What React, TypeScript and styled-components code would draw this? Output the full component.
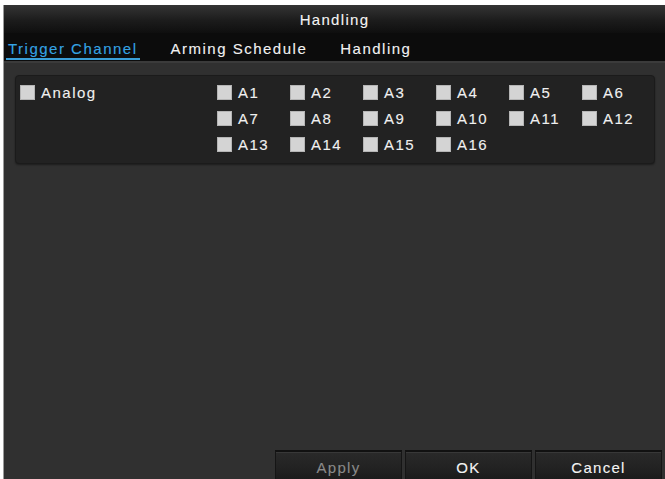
import React from "react";
import styled, { createGlobalStyle } from "styled-components";

const Global = createGlobalStyle`
  html, body { margin: 0; padding: 0; background: #ffffff; }
  body { font-family: "Liberation Sans", Arial, sans-serif; }
  * { box-sizing: border-box; }
`;

const Page = styled.div`
  width: 665px;
  height: 479px;
  padding: 5px 0 0 3px;
  background: #ffffff;
  overflow: hidden;
`;

const Dialog = styled.div`
  height: 474px;
  display: flex;
  flex-direction: column;
  border-left: 1px solid #9a9a9a;
  background: #303030;
  font-size: 15px;
  letter-spacing: 1.5px;
  color: #f2f2f2;
  -webkit-text-stroke: 0.1px currentColor;
`;

const TitleBar = styled.div`
  height: 28px;
  display: flex;
  align-items: center;
  justify-content: center;
  background: linear-gradient(#343434 0%, #1c1c1c 55%, #0f0f0f 100%);
  letter-spacing: 1.3px;
  color: #f4f4f4;
`;

const TabBar = styled.div`
  height: 30px;
  display: flex;
  align-items: flex-start;
  gap: 29px;
  padding: 5px 0 0 2px;
  background: #0c0c0c;
  border-bottom: 2px solid #3b3b3b;
`;

const Tab = styled.div<{ $active?: boolean }>`
  height: 22px;
  display: flex;
  align-items: center;
  padding: 0 2px 0 2px;
  color: ${(p) => (p.$active ? "#35a4e4" : "#f2f2f2")};
  border-bottom: 2px solid ${(p) => (p.$active ? "#3a9fd8" : "transparent")};
`;

const Body = styled.div`
  flex: 1;
  display: flex;
  flex-direction: column;
  padding: 12px 10px 0 11px;
  background: #303030;
`;

const Panel = styled.div`
  display: grid;
  grid-template-columns: 197px repeat(6, 73px);
  grid-auto-rows: 26px;
  padding: 3px 0 6px 4px;
  background: #222222;
  border: 1px solid #1b1b1b;
  border-radius: 4px;
  box-shadow: 0 1px 2px rgba(0, 0, 0, 0.4);
`;

const Item = styled.label<{ $col: number; $row: number }>`
  grid-column: ${(p) => p.$col};
  grid-row: ${(p) => p.$row};
  display: flex;
  align-items: center;
  gap: 6px;
  color: #f0f0f0;
`;

const Box = styled.span`
  width: 15px;
  height: 15px;
  flex: none;
  background: #d4d4d4;
  border: 1px solid #b5b5b5;
`;

const Footer = styled.div`
  height: 29px;
  display: flex;
  justify-content: flex-end;
  gap: 3px;
  padding-right: 3px;
  background: #303030;
`;

const Button = styled.div<{ $disabled?: boolean }>`
  width: 127px;
  display: flex;
  align-items: center;
  justify-content: center;
  padding-top: 3px;
  background: linear-gradient(#2a2a2a 0%, #222222 60%, #1b1b1b 100%);
  border-top: 2px solid #111111;
  border-left: 1px solid #151515;
  border-right: 1px solid #151515;
  box-shadow: inset 0 1px 0 #383838;
  color: ${(p) => (p.$disabled ? "#8a8a8a" : "#f4f4f4")};
  letter-spacing: 1.3px;
`;

const channels = Array.from({ length: 16 }, (_, i) => `A${i + 1}`);

export default function App() {
  return (
    <Page>
      <Global />
      <Dialog>
        <TitleBar>Handling</TitleBar>
        <TabBar>
          <Tab $active>Trigger Channel</Tab>
          <Tab>Arming Schedule</Tab>
          <Tab>Handling</Tab>
        </TabBar>
        <Body>
          <Panel>
            <Item $col={1} $row={1}>
              <Box />
              Analog
            </Item>
            {channels.map((name, i) => (
              <Item key={name} $col={(i % 6) + 2} $row={Math.floor(i / 6) + 1}>
                <Box />
                {name}
              </Item>
            ))}
          </Panel>
        </Body>
        <Footer>
          <Button $disabled>Apply</Button>
          <Button>OK</Button>
          <Button>Cancel</Button>
        </Footer>
      </Dialog>
    </Page>
  );
}
